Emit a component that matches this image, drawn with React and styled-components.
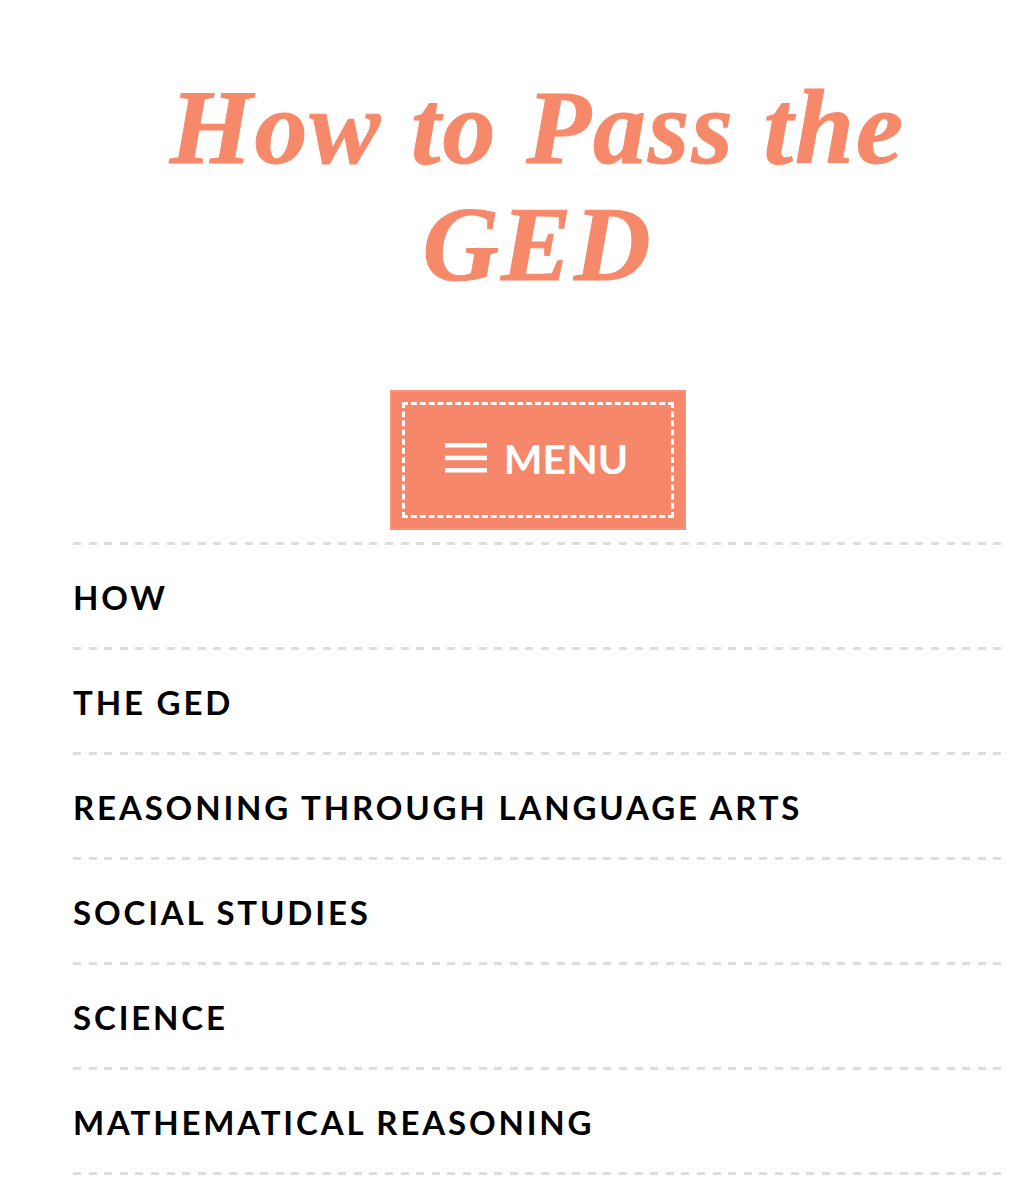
import React from "react";
import styled, { createGlobalStyle } from "styled-components";

const Global = createGlobalStyle`
  html, body { margin: 0; padding: 0; background: #fff; }
  body { font-family: Lato, "Open Sans", sans-serif; }
`;

const Page = styled.div`
  padding: 69px 33px 0 73px;
  display: flex;
  flex-direction: column;
  align-items: center;
`;

const Title = styled.h1`
  margin: 0;
  max-width: 820px;
  text-align: center;
  font-family: "Liberation Serif", "DejaVu Serif", serif;
  font-style: italic;
  font-weight: 700;
  font-size: 106px;
  letter-spacing: 2.1px;
  line-height: 117px;
  color: #f7896b;
  -webkit-text-stroke: 1px #f7896b;
`;

const MenuButton = styled.button`
  margin-top: 87px;
  width: 296px;
  height: 140px;
  box-sizing: border-box;
  background: #f7876a;
  border: 2px solid #f8937a;
  outline: 3px dashed #fff;
  outline-offset: -15px;
  display: flex;
  align-items: center;
  justify-content: center;
  gap: 17px;
  padding: 0 2px 4px 0;
  cursor: pointer;
  color: #fff;
  font-family: Lato, sans-serif;
  font-weight: 700;
  font-size: 41px;
`;

const Burger = styled.svg`
  width: 42px;
  height: 30px;
  display: block;
`;

const Nav = styled.ul`
  list-style: none;
  margin: 12px 0 0 0;
  padding: 0;
  align-self: stretch;
`;

const Dash = styled.div`
  height: 3px;
  background: repeating-linear-gradient(to right, #dddddd 0 8px, transparent 8px 15.6px);
`;

const Item = styled.li`
  height: 102px;
  display: flex;
  align-items: center;
  font-family: Lato, sans-serif;
  font-weight: 700;
  font-size: 33px;
  letter-spacing: 2.85px;
  color: #000;
  padding-top: 1px;
  box-sizing: border-box;
`;

const items = [
  "HOW",
  "THE GED",
  "REASONING THROUGH LANGUAGE ARTS",
  "SOCIAL STUDIES",
  "SCIENCE",
  "MATHEMATICAL REASONING",
];

export default function App() {
  return (
    <>
      <Global />
      <Page>
        <Title>How to Pass the GED</Title>
        <MenuButton>
          <Burger viewBox="0 0 42 30">
            <rect x="0" y="0" width="42" height="4.5" fill="#fff" />
            <rect x="0" y="12.7" width="42" height="4.5" fill="#fff" />
            <rect x="0" y="25" width="42" height="4.5" fill="#fff" />
          </Burger>
          MENU
        </MenuButton>
        <Nav>
          <Dash />
          {items.map((t) => (
            <React.Fragment key={t}>
              <Item>{t}</Item>
              <Dash />
            </React.Fragment>
          ))}
        </Nav>
      </Page>
    </>
  );
}
